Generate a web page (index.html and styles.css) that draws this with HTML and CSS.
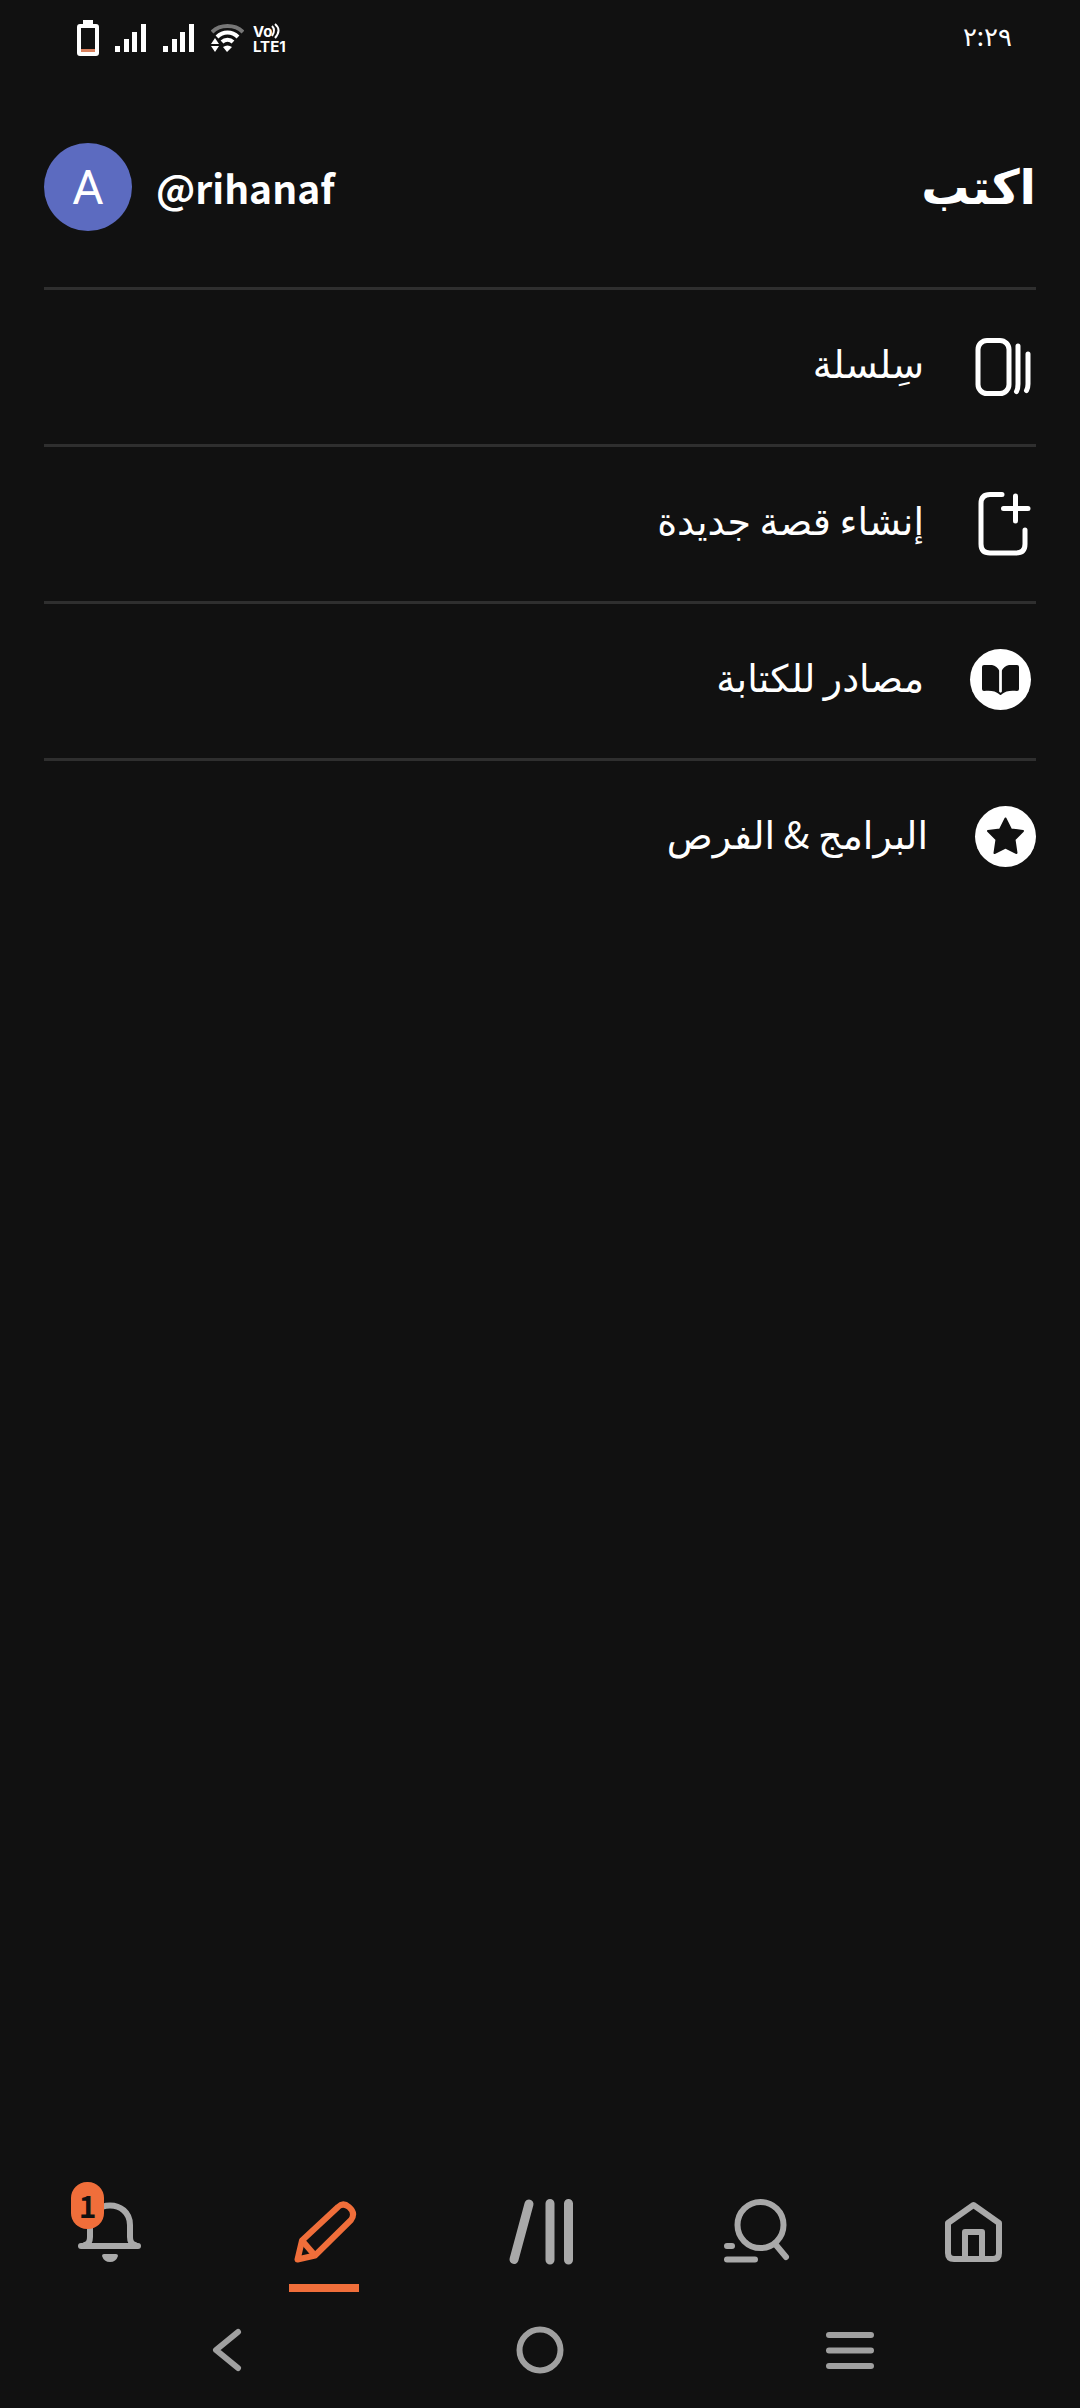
FILE: index.html
```html
<!DOCTYPE html>
<html lang="ar" dir="rtl">
<head>
    <meta charset="UTF-8">
    <meta name="viewport" content="width=device-width, initial-scale=1.0">
    <title>اكتب</title>
    <link rel="stylesheet" href="styles.css">
</head>
<body>
    <div class="status-bar">
        <time class="clock">٢:٢٩</time>
        <div class="status-icons">
            <svg class="battery" viewBox="0 0 22 36">
                <rect x="6" y="0" width="10" height="5" fill="#fff"/>
                <rect x="2" y="6" width="18" height="28" rx="1" fill="none" stroke="#fff" stroke-width="4"/>
                <rect x="4" y="29" width="14" height="3" fill="#d9825f"/>
            </svg>
            <svg class="signal" viewBox="0 0 32 28" fill="#fff">
                <path d="M0 22h5v6H0zM9 15h5v13H9zM17 8h5v20h-5zM26 0h5v28h-5z"/>
            </svg>
            <svg class="signal" viewBox="0 0 32 28" fill="#fff">
                <path d="M0 22h5v6H0zM9 15h5v13H9zM17 8h5v20h-5zM26 0h5v28h-5z"/>
            </svg>
            <svg class="wifi" viewBox="0 0 33 28" fill="none" stroke-width="4">
                <path d="M1 8C9 0 24 0 32 8" stroke="#777"/>
                <path d="M6 13C12 7 21 7 27 13M11 18C14 15 19 15 22 18" stroke="#fff"/>
                <path d="M12 23C15 21 18 21 21 23L16 28zM0 20L4 14L8 20zM0 22H8L4 28z" fill="#fff"/>
            </svg>
            <svg class="volte" viewBox="0 0 44 40" direction="ltr">
                <text class="volte-text" x="1" y="19">Vo</text>
                <path d="M20 8Q24 12 20 18M23 6Q30 12 23 20" fill="none" stroke="#fff" stroke-width="2"/>
                <text class="volte-text" x="1" y="34">LTE1</text>
            </svg>
        </div>
    </div>

    <header class="header">
        <h1>اكتب</h1>
        <a href="#" class="profile">
            <span class="username" dir="ltr">@rihanaf</span>
            <span class="avatar">A</span>
        </a>
    </header>

    <main class="menu">
        <a href="#" class="menu-item">
            <svg class="menu-icon" viewBox="0 0 64 64" fill="none" stroke="#fff" stroke-width="5" stroke-linecap="round">
                <rect x="10" y="5.500" width="31" height="53" rx="9"/>
                <path d="M50 11V49Q50 54 48.500 56.500M60 19V49Q60 53 58.500 55.500"/>
            </svg>
            <span class="menu-label">سِلسلة</span>
        </a>
        <a href="#" class="menu-item">
            <svg class="menu-icon" viewBox="0 0 64 64" fill="none" stroke="#fff" stroke-width="5" stroke-linecap="round">
                <path d="M34 2.500H22Q13 2.500 13 11.500V52Q13 61 22 61H48Q57 61 57 52V38"/>
                <path d="M47.500 4V29M35.500 16.500H60"/>
            </svg>
            <span class="menu-label">إنشاء قصة جديدة</span>
        </a>
        <a href="#" class="menu-item">
            <svg class="menu-icon" viewBox="0 0 64 64">
                <circle cx="32.500" cy="30.500" r="30.500" fill="#fff"/>
                <path d="M16 16H24Q29 17 31.500 22V43Q33 44 33.500 43V22Q36 17 41 16H49Q51 16 51 18V40Q51 42 49 42C43 41 37 42 34 45Q32.500 47 31 45C28 42 22 41 16 42Q14 42 14 40V18Q14 16 16 16Z" fill="#111"/>
                <path d="M32.500 21V42" stroke="#fff" stroke-width="2.500" stroke-linecap="round"/>
            </svg>
            <span class="menu-label">مصادر للكتابة</span>
        </a>
        <a href="#" class="menu-item">
            <svg class="menu-icon" viewBox="0 0 64 64">
                <circle cx="33.500" cy="30.500" r="30.500" fill="#fff"/>
                <path d="M33.500 12.500L39 23.500L51 25L42.500 33.500L44.500 47L33.500 41.500L22.500 47L24.500 33.500L16 25L28 23.500Z" fill="#111" stroke="#111" stroke-width="2" stroke-linejoin="round"/>
            </svg>
            <span class="menu-label">البرامج &amp; الفرص</span>
        </a>
    </main>

    <nav class="tab-bar">
        <a href="#" class="tab" aria-label="الرئيسية">
            <svg viewBox="0 0 72 72" fill="none" stroke="currentColor" stroke-width="6" stroke-linejoin="round">
                <path d="M12 27L37.500 9L63 27V57Q63 63 57 63H18Q12 63 12 57Z"/>
                <path d="M29 63V36H46V63"/>
            </svg>
        </a>
        <a href="#" class="tab" aria-label="بحث">
            <svg viewBox="0 0 72 72" fill="none" stroke="currentColor" stroke-width="6" stroke-linecap="round">
                <circle cx="40.500" cy="29" r="23"/>
                <path d="M56 49L66 61M7 50H12M7 63.500H35"/>
            </svg>
        </a>
        <a href="#" class="tab" aria-label="المكتبة">
            <svg viewBox="0 0 72 72" fill="none" stroke="currentColor" stroke-width="9" stroke-linecap="round">
                <path d="M25 8L10 63.500M46 7.500V64M64.500 7.500V64"/>
            </svg>
        </a>
        <a href="#" class="tab active" aria-label="اكتب">
            <svg viewBox="0 0 72 72" fill="none" stroke="currentColor" stroke-width="6" stroke-linejoin="round">
                <path d="M9.500 63.500L14 44.500L50 11Q55 6 61 11Q68 17 63 24L27 59.500Z"/>
                <path d="M14 44.500L27 59.500"/>
            </svg>
        </a>
        <a href="#" class="tab" aria-label="الإشعارات">
            <svg viewBox="0 0 72 72" fill="none" stroke="currentColor" stroke-width="6" stroke-linecap="round">
                <path d="M9 50H66"/>
                <path d="M13 49Q18 48 18 41V29C18 3 58 3 58 29V41Q58 48 63 49"/>
                <path d="M32 58H44Q46 58 46 60Q44 66 38 66Q32 66 30 60Q30 58 32 58Z" fill="currentColor" stroke="none"/>
            </svg>
            <span class="badge">1</span>
        </a>
    </nav>

    <div class="system-nav">
        <button type="button" aria-label="التطبيقات">
            <svg viewBox="0 0 64 64" fill="none" stroke="currentColor" stroke-width="6" stroke-linecap="round">
                <path d="M9 17H51M9 32.500H51M9 48H51"/>
            </svg>
        </button>
        <button type="button" aria-label="الشاشة الرئيسية">
            <svg viewBox="0 0 64 64" fill="none" stroke="currentColor" stroke-width="6">
                <circle cx="32" cy="32" r="20.500"/>
            </svg>
        </button>
        <button type="button" aria-label="رجوع">
            <svg viewBox="0 0 64 64" fill="none" stroke="currentColor" stroke-width="6" stroke-linecap="round" stroke-linejoin="round">
                <path d="M42 14L20 32L42 50"/>
            </svg>
        </button>
    </div>
</body>
</html>
```

FILE: styles.css
```css
* {
    box-sizing: border-box;
    margin: 0;
    padding: 0;
}

body {
    display: flex;
    flex-direction: column;
    min-height: 100vh;
    font-family: 'Noto Sans CJK SC', 'DejaVu Sans', sans-serif;
    background-color: #111;
    color: #fff;
}

a {
    color: inherit;
    text-decoration: none;
}

svg {
    display: block;
}

/* Status bar */
.status-bar {
    display: flex;
    justify-content: space-between;
    align-items: center;
    height: 76px;
    padding: 0 68px 0 77px;
}

.clock {
    padding-bottom: 8px;
    font-size: 26px;
}

.status-icons {
    display: flex;
    flex-direction: row-reverse;
    align-items: center;
    gap: 16px;
}

.battery {
    width: 22px;
    height: 36px;
}

.signal {
    width: 32px;
    height: 28px;
}

.wifi {
    width: 33px;
    height: 28px;
}

.volte {
    width: 44px;
    height: 40px;
    margin-left: -8px;
}

.volte-text {
    font-family: Inter, sans-serif;
    font-size: 15px;
    font-weight: 700;
    fill: #fff;
}

/* Header */
.header {
    display: flex;
    justify-content: space-between;
    align-items: center;
    height: 214px;
    margin: 0 44px;
    padding-top: 11px;
    border-bottom: 3px solid #2f2f2f;
}

h1 {
    padding-bottom: 8px;
    font-size: 48px;
    font-weight: 700;
}

.profile {
    display: flex;
    align-items: center;
    gap: 24px;
}

.username {
    font-size: 39px;
    font-weight: 700;
}

.avatar {
    display: flex;
    justify-content: center;
    align-items: center;
    width: 88px;
    height: 88px;
    border-radius: 50%;
    background-color: #5c6bc0;
    font-family: Roboto, sans-serif;
    font-size: 48px;
}

/* Menu */
.menu {
    flex: 1;
    margin: 0 44px;
}

.menu-item {
    display: flex;
    align-items: center;
    gap: 44px;
    height: 157px;
    padding-right: 4px;
    border-bottom: 3px solid #2f2f2f;
    font-size: 38px;
}

.menu-item:last-child {
    padding-right: 0;
    border-bottom-color: transparent;
}

.menu-icon {
    flex-shrink: 0;
    width: 64px;
    height: 64px;
}

.menu-label {
    padding-bottom: 12px;
}

/* Bottom tabs */
.tab-bar {
    display: flex;
    color: #a9a9a9;
}

.tab {
    position: relative;
    flex: 1;
    display: flex;
    flex-direction: column;
    align-items: center;
    gap: 16px;
    height: 112px;
}

.tab svg {
    width: 72px;
    height: 72px;
}

.tab.active {
    color: #f06e3a;
}

.tab.active::after {
    content: '';
    width: 70px;
    height: 8px;
    background-color: #f06e3a;
}

.badge {
    position: absolute;
    top: -14px;
    right: 50%;
    margin-right: 4px;
    width: 33px;
    height: 47px;
    border-radius: 16px;
    background-color: #f06e3a;
    color: #111;
    font-size: 30px;
    font-weight: 700;
    line-height: 47px;
    text-align: center;
}

/* System navigation */
.system-nav {
    display: flex;
    height: 100px;
    padding: 10px 72px 26px;
}

.system-nav button {
    flex: 1;
    display: flex;
    justify-content: center;
    border: none;
    background: none;
    color: #a0a0a0;
    cursor: pointer;
}

.system-nav svg {
    width: 64px;
    height: 64px;
}
```
